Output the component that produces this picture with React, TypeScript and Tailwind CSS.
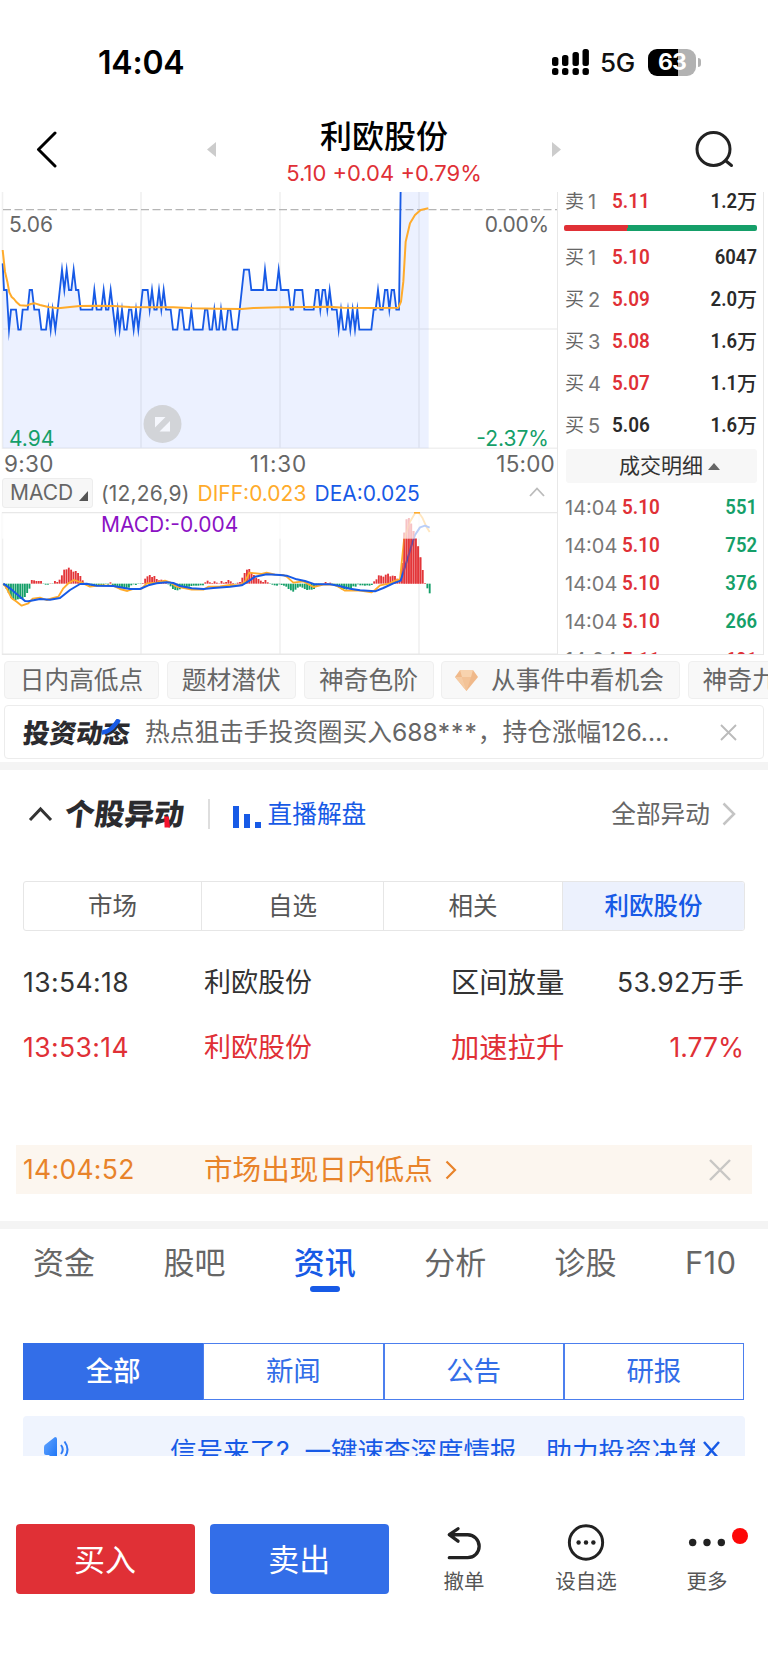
import React from 'react';

const PRICE =
  '8,235 12,315 20,315 27,434 33,374 48,374 55,434 62,434 68,374 83,374 89,315 96,315 103,374 117,374 124,434 138,434 145,374 152,434 158,374 166,434 173,374 186,254 193,315 200,254 207,315 214,315 221,254 228,315 235,315 242,374 277,374 283,315 290,374 304,374 311,315 318,374 325,374 332,315 346,434 353,374 359,434 366,374 373,434 380,434 387,374 394,374 401,434 408,374 415,434 428,315 443,315 449,374 456,315 463,374 470,374 477,315 484,374 491,315 498,374 512,374 519,434 532,434 539,374 546,374 553,434 567,434 574,374 581,434 608,434 615,374 622,374 629,434 636,434 643,374 650,434 657,434 663,374 670,434 677,434 684,374 691,374 698,434 712,434 719,374 732,254 747,254 754,315 789,315 795,254 802,315 829,315 836,254 843,315 865,315 872,374 879,374 885,315 907,315 913,374 941,374 948,315 955,315 961,374 968,315 975,315 982,374 989,315 996,374 1010,374 1016,434 1023,374 1030,434 1037,434 1044,374 1051,434 1058,374 1065,434 1072,374 1078,434 1114,434 1121,374 1127,374 1134,315 1141,374 1148,374 1155,315 1162,315 1168,374 1175,315 1182,315 1189,374 1197,374 1202,10';

const AVERAGE =
  '8,195 15,260 22,290 28,322 35,336 42,342 50,352 60,361 80,362 92,357 105,355 120,360 145,366 175,370 210,366 240,363 290,362 340,363 390,366 450,367 520,367 580,370 650,371 725,372 760,369 840,367 990,365 1030,368 1120,369 1195,368 1203,350 1210,290 1217,170 1230,115 1245,90 1262,75 1285,70';

const DIFF =
  '10,431 20,445 35,475 50,485 65,497 85,490 98,476 120,473 140,480 160,474 175,470 190,445 205,430 222,420 245,428 270,440 300,436 340,437 360,447 382,453 400,447 425,446 440,430 470,428 495,422 510,427 530,440 545,443 575,449 610,449 625,440 660,439 690,435 720,436 735,425 748,398 785,402 800,398 825,404 850,405 860,410 880,428 910,424 940,441 970,434 1000,434 1015,440 1035,452 1080,452 1115,457 1125,450 1140,436 1170,430 1185,422 1200,418 1212,300 1230,245 1245,220 1251,216 1256,217 1268,235 1280,262 1289,276';

const DEA =
  '10,431 30,445 50,462 75,483 85,484 120,477 150,479 180,474 210,450 240,432 260,431 290,437 340,438 390,447 420,447 445,436 470,430 500,427 520,429 540,438 575,445 610,447 640,444 690,440 725,436 745,424 765,410 800,403 840,405 860,407 890,418 915,423 945,433 990,433 1015,437 1050,446 1080,451 1125,454 1150,444 1180,430 1202,422 1220,365 1235,315 1245,285 1260,262 1275,257 1289,263';

const HISTOGRAM = [
  -6, -15, -28, -42, -48, -50, -47, -46, -45, -40, -28, -15, 11, 10, 8, 8, 8, -1, -3, -3, 1, 0, 8, 5, 12, 25, 42, 43, 48, 42,
  36, 38, 32, 23, 10, -2, -5, -9, -10, -9, -5, -7, -7, -5, 0, -3, 4, -4, -7, -10, -12, -13, -14, -13, -12, -5, -2, -4, 0, -1,
  2, 15, 22, 26, 20, 23, 14, 10, 12, 10, 4, -2, -8, -16, -19, -20, -17, -11, -9, -10, -9, -7, -6, -6, -6, -5, -5, 4, 9, 4,
  2, 7, 3, 1, 8, 3, 5, 11, 7, 2, 0, 3, 5, 18, 32, 42, 44, 34, 26, 18, 14, 9, 5, 11, 4, -1, -3, -5, -6, -2,
  -4, -6, -9, -16, -20, -24, -18, -12, -9, -12, -16, -19, -18, -18, -16, -8, -4, -1, 1, 5, 2, 3, -2, -5, -8, -13, -17, -16, -18, -16,
  -14, -8, -9, -2, -5, -5, -6, -5, -6, -4, 7, 13, 25, 24, 21, 27, 30, 22, 24, 23, 15, 10, 62, 153, 193, 197, 180, 158, 137, 112,
  79, 41, 2, -14, -29,
];

function Bars({ from, to, opacity }: { from: number; to: number; opacity: number }) {
  return (
    <g fillOpacity={opacity}>
      {HISTOGRAM.slice(from, to).map((v, i) => (
        <rect
          key={i}
          x={9.3 + (from + i) * 6.94}
          y={v > 0 ? 431 - v : 431}
          width="5.6"
          height={Math.max(Math.abs(v), 1)}
          fill={v > 0 ? '#e33539' : '#159f69'}
        />
      ))}
    </g>
  );
}

function StatusBar() {
  return (
    <div className="flex h-[104px] shrink-0 items-start pl-[98px] pr-[67px] pt-[43px]">
      <span className="text-[32px] font-semibold leading-[40px] tracking-[-0.200px] text-black">14:04</span>
      <div className="ml-auto flex items-center">
        <svg className="-mt-[1px] h-[26px] w-[38px]" viewBox="0 0 38 26">
          <g fill="#000">
            <rect x="0" y="8" width="6.400" height="9" rx="2.500" />
            <rect x="10" y="6" width="6.400" height="11" rx="2.500" />
            <rect x="20.500" y="3" width="6.400" height="14" rx="2.500" />
            <rect x="30.500" y="0" width="6.400" height="17" rx="2.500" />
            <rect x="0" y="19" width="6.400" height="7" rx="2.500" />
            <rect x="10" y="19" width="6.400" height="7" rx="2.500" />
            <rect x="20.500" y="19" width="6.400" height="7" rx="2.500" />
            <rect x="30.500" y="19" width="6.400" height="7" rx="2.500" />
          </g>
        </svg>
        <span className="ml-[10px] mt-[1px] w-[48px] text-[26px] font-medium leading-[38px] tracking-[-0.300px] text-[#111]">5G</span>
        <div className="-mt-[1px] flex h-[27px] w-[48px] items-center justify-center rounded-[9px] bg-[linear-gradient(90deg,#000_63%,#b2b2b2_63%)] text-[23px] font-bold leading-none tracking-[-1px] text-white">
          63
        </div>
        <span className="-mt-[1px] ml-[2px] h-[9px] w-[3px] rounded-r-full bg-[#b2b2b2]" />
      </div>
    </div>
  );
}

function Header() {
  return (
    <div className="flex h-[88px] shrink-0 items-start pl-[34px] pr-[33px]">
      <svg className="mt-[26px] h-[38px] w-[24px]" viewBox="0 0 24 38" fill="none" stroke="#000" strokeWidth="3" strokeLinecap="round" strokeLinejoin="round">
        <path d="M21 3L4.500 19.500 21 36" />
      </svg>
      <svg className="ml-[148px] mt-[37px] h-[17px] w-[11px]" viewBox="0 0 11 17">
        <path d="M10 1v15L1 8.500z" fill="#ccc" />
      </svg>
      <div className="flex w-[334px] flex-col items-center">
        <h1 className="mt-[13px] text-[32px] font-medium leading-[40px] text-black">利欧股份</h1>
        <p className="mt-[3px] whitespace-pre text-[22px] leading-[26px] text-[#e03036]">5.10 +0.04 +0.79%</p>
      </div>
      <svg className="mt-[37px] h-[17px] w-[11px]" viewBox="0 0 11 17">
        <path d="M1 1v15l9-7.500z" fill="#ccc" />
      </svg>
      <svg className="ml-auto mt-[26px] h-[38px] w-[41px]" viewBox="0 0 41 38" fill="none" stroke="#222" strokeWidth="3" strokeLinecap="round">
        <circle cx="19.500" cy="19" r="16.500" />
        <path d="M32 31l5.500 4.500" />
      </svg>
    </div>
  );
}

function PriceChart() {
  return (
    <div className="relative h-[257px] w-[557px]">
      <svg className="block h-[257px] w-[557px]" viewBox="0 192 557 257">
        <g stroke="#f0f0f0" strokeWidth="1.600">
          <path d="M2.500 192V449M141 192V449M280 192V449M419 192V449M2 329H557M2 448.300H557" />
        </g>
        <path d="M3 209.700H557" stroke="#b5b5b5" strokeWidth="1.300" strokeDasharray="8 3.500" />
        <g transform="translate(0 185) scale(0.333333)" fill="none">
          <polygon points={PRICE + ' 1202,0 1286,0 1286,790 8,790'} fill="#2a66ff" fillOpacity="0.09" />
          <polyline points={PRICE} stroke="#175ae6" strokeWidth="5.500" strokeMiterlimit="20" />
          <polyline points={AVERAGE} stroke="#ffab2b" strokeWidth="6" strokeLinejoin="round" />
        </g>
        <circle cx="162.500" cy="424" r="19" fill="#d2d4d8" />
        <path d="M155 417h10.500L155 427.500zM170 431.500h-10.500L170 421z" fill="#f5f7fd" />
      </svg>
      <span className="absolute left-[9px] top-[20px] text-[21px] leading-[26px] text-[#666]">5.06</span>
      <span className="absolute right-[8px] top-[20px] text-[21px] leading-[26px] tracking-[-0.200px] text-[#666]">0.00%</span>
      <span className="absolute left-[9px] top-[234px] text-[21px] leading-[26px] text-[#159f69]">4.94</span>
      <span className="absolute right-[8px] top-[234px] text-[21px] leading-[26px] text-[#159f69]">-2.37%</span>
    </div>
  );
}

function MacdChart() {
  return (
    <div className="relative h-[143px] w-[557px]">
      <svg className="block h-[143px] w-[557px]" viewBox="0 512 557 143">
        <path d="M2.500 512V655M141 512V655M280 512V655M419 512V655" stroke="#f0f0f0" strokeWidth="1.600" />
        <g transform="translate(0 440) scale(0.333333)" fill="none">
          <Bars from={0} to={HISTOGRAM.length} opacity={1} />
          <polyline points={DIFF} stroke="#ffab2b" strokeWidth="5.500" strokeLinejoin="round" />
          <polyline points={DEA} stroke="#175ae6" strokeWidth="6" strokeLinejoin="round" />
          <Bars from={173} to={181} opacity={0.65} />
        </g>
        <rect x="2" y="513" width="554" height="25.700" fill="#fff" fillOpacity="0.700" />
        <path d="M2 512.500H557M2 654.300H557" stroke="#e8e8e8" strokeWidth="1.400" />
        <path d="M414 512.800h6" stroke="#ffab2b" strokeWidth="1.600" />
      </svg>
      <span className="absolute left-[101px] top-[0px] text-[21px] leading-[26px] text-[#8b12c4]">MACD:-0.004</span>
    </div>
  );
}

const BIDS = [
  ['买', '1', '5.10', '6047', ''],
  ['买', '2', '5.09', '2.0', '万'],
  ['买', '3', '5.08', '1.6', '万'],
  ['买', '4', '5.07', '1.1', '万'],
  ['买', '5', '5.06', '1.6', '万'],
];

function QuoteRow({ row, red }: { row: string[]; red: boolean }) {
  return (
    <div className="flex h-[42px] items-center pl-[7px] pr-[6px]">
      <span className="w-[23px] text-[19px] text-[#666]">{row[0]}</span>
      <span className="w-[24px] text-[20px] text-[#777]">{row[1]}</span>
      <span className={'origin-left scale-x-[0.9] font-[Roboto] text-[21px] font-semibold ' + (red ? 'text-[#e03036]' : 'text-[#2a2a2a]')}>{row[2]}</span>
      <span className="ml-auto flex items-center text-[#2a2a2a]">
        <span className="origin-right scale-x-[0.88] font-[Roboto] text-[21px] font-semibold">{row[3]}</span>
        {row[4] && <span className="text-[20px] font-medium">{row[4]}</span>}
      </span>
    </div>
  );
}

const TRADES = [
  ['5.10', '551'],
  ['5.10', '752'],
  ['5.10', '376'],
  ['5.10', '266'],
  ['5.11', '601'],
];

function OrderBook() {
  return (
    <div className="h-[463px] w-[207px] overflow-hidden border-x-[1.500px] border-b-[1.500px] border-[#e8e8e8]">
      <div className="-mt-[11px]">
        <QuoteRow row={['卖', '1', '5.11', '1.2', '万']} red />
      </div>
      <div className="mx-[6px] mt-[2px] h-[6px] rounded-[2px] bg-[linear-gradient(105deg,#e03036_33%,#159f69_33%)]" />
      <div className="mt-[6px]">
        {BIDS.map((r, i) => (
          <QuoteRow key={i} row={r} red={i < 4} />
        ))}
      </div>
      <div className="ml-[8px] mr-[6px] mt-[2px] flex h-[34px] items-center justify-center rounded-[3px] bg-[#f7f7f7] pl-[16px]">
        <span className="text-[21px] text-[#333]">成交明细</span>
        <svg className="ml-[5px] h-[7px] w-[12px]" viewBox="0 0 12 7">
          <path d="M6 0l6 7H0z" fill="#666" />
        </svg>
      </div>
      <div className="mt-[5.500px]">
        {TRADES.map((t, i) => (
          <div key={i} className="flex h-[38.200px] items-center pl-[7px] pr-[6px]">
            <span className="w-[57px] text-[20px] text-[#777]">14:04</span>
            <span className="origin-left scale-x-[0.9] font-[Roboto] text-[21px] font-semibold text-[#e03036]">{t[0]}</span>
            <span className={'ml-auto origin-right scale-x-[0.88] font-[Roboto] text-[21px] font-semibold ' + (i < 4 ? 'text-[#159f69]' : 'text-[#e03036]')}>
              {t[1]}
            </span>
          </div>
        ))}
      </div>
    </div>
  );
}

function MarketPanel() {
  return (
    <div className="flex h-[463px] shrink-0">
      <div className="w-[557px]">
        <PriceChart />
        <div className="flex h-[29px] items-center justify-between pl-[4px] pr-[2px] pt-[1px] text-[22.500px] leading-none text-[#666]">
          <span className="w-[70px] tracking-[0.300px]">9:30</span>
          <span className="-ml-[2px] tracking-[0.900px]">11:30</span>
          <span className="w-[70px] text-right tracking-[0.200px]">15:00</span>
        </div>
        <div className="flex h-[34px] items-start text-[21px] leading-[30px]">
          <div className="ml-[2px] flex h-[30px] w-[91px] items-center rounded-[3px] border border-[#ededed] bg-[#f7f7f7] pl-[7px] text-[#666]">
            <span>MACD</span>
            <svg className="ml-[6px] mt-[6px] h-[10px] w-[9px]" viewBox="0 0 9 10">
              <path d="M9 0v10H0z" fill="#555" />
            </svg>
          </div>
          <span className="ml-[8px] mt-[1px] w-[96.500px] tracking-[0.200px] text-[#666]">(12,26,9)</span>
          <span className="mt-[1px] w-[117px] text-[#ffab2b]">DIFF:0.023</span>
          <span className="mt-[1px] text-[#175ae6]">DEA:0.025</span>
          <svg className="ml-auto mr-[12px] mt-[9px] h-[10px] w-[16px]" viewBox="0 0 16 10" fill="none" stroke="#bbb" strokeWidth="1.800">
            <path d="M1 9l7-7.500L15 9" />
          </svg>
        </div>
        <MacdChart />
      </div>
      <OrderBook />
    </div>
  );
}

function Chips() {
  const chip = 'flex h-[38px] shrink-0 items-center rounded-[4px] border border-[#efefef] bg-[#f8f8f8] pt-[2px]';
  return (
    <div className="mt-[6px] flex h-[38px] shrink-0 gap-[7.500px] overflow-hidden pl-[4px] text-[24.700px] text-[#666]">
      <span className={chip + ' w-[155px] justify-center'}>日内高低点</span>
      <span className={chip + ' w-[129.500px] justify-center'}>题材潜伏</span>
      <span className={chip + ' w-[130px] justify-center'}>神奇色阶</span>
      <span className={chip + ' w-[239px] pl-[13px]'}>
        <svg className="-mt-[3px] mr-[13px] h-[22px] w-[23px]" viewBox="0 0 23 22">
          <path d="M5 1h13l5 7-11.500 14L0 8z" fill="#f0b98a" />
          <path d="M5 1h13l-2 7H7z" fill="#f8d3ae" />
          <path d="M7 8h9l-4.500 14z" fill="#f3c397" />
          <path d="M0 8h7l4.500 14z" fill="#f5cba3" />
        </svg>
        从事件中看机会
      </span>
      <span className={chip + ' w-[155px] pl-[14px]'}>神奇九转</span>
    </div>
  );
}

function Ticker() {
  return (
    <div className="ml-[4px] mt-[6px] flex h-[54px] w-[760px] shrink-0 items-center rounded-[4px] border-[1.500px] border-[#ececec] pl-[18px] pr-[26px]">
      <span className="relative mr-[14px] mt-[1px] inline-block w-[108px] -skew-x-[6deg] text-[26.700px] font-black leading-[30px] text-[#2b2b2f]">
        投资动态
        <svg className="absolute left-[78px] top-[1px] h-[17px] w-[20px]" viewBox="0 0 20 17" fill="none" stroke="#175ae6" strokeWidth="4.600">
          <path d="M16.500 0.500C12 8 8 13 1 13.500" />
        </svg>
      </span>
      <span className="mt-[2px] whitespace-nowrap text-[24.700px] text-[#666]">
        热点狙击手投资圈买入688<span className="tracking-[1px]">***</span>，持仓涨幅126.…
      </span>
      <svg className="ml-auto h-[17px] w-[17px]" viewBox="0 0 17 17" stroke="#bbb" strokeWidth="1.900">
        <path d="M1 1l15 15M16 1L1 16" />
      </svg>
    </div>
  );
}

function MovementSection() {
  const cell = 'flex items-center justify-center border-r-[1.500px] border-[#e6e6e6]';
  return (
    <section className="flex h-[451px] shrink-0 flex-col">
      <div className="mt-[26px] flex h-[36px] items-center pl-[28px] pr-[32px]">
        <svg className="h-[16px] w-[25px]" viewBox="0 0 25 16" fill="none" stroke="#333" strokeWidth="3">
          <path d="M2 14L12.500 3 23 14" />
        </svg>
        <span className="relative ml-[12px] inline-block w-[121px] -skew-x-[6deg] text-[29.800px] font-black leading-[36px] text-[#2b2b2f]">
          个股异动
          <svg className="absolute left-[99px] top-[20px] h-[12px] w-[8px]" viewBox="0 0 8 12">
            <path d="M0.500 0.500h4.500L7.500 11.500H2z" fill="#f5132d" />
          </svg>
        </span>
        <span className="ml-[22px] h-[30px] w-[1.500px] bg-[#dedede]" />
        <svg className="ml-[23px] mt-[5px] h-[22px] w-[28px]" viewBox="0 0 28 22" fill="#175ae6">
          <rect x="0" y="0" width="6" height="22" />
          <rect x="11" y="8" width="6" height="14" />
          <rect x="22" y="16" width="6" height="6" />
        </svg>
        <span className="ml-[7px] mt-[2px] text-[24.700px] text-[#175ae6]">直播解盘</span>
        <span className="ml-auto mt-[2px] text-[24.700px] text-[#666]">全部异动</span>
        <svg className="ml-[12px] h-[24px] w-[14px]" viewBox="0 0 14 24" fill="none" stroke="#c4c4c4" strokeWidth="2.500">
          <path d="M1.500 1.500L12 12 1.500 22.500" />
        </svg>
      </div>
      <div className="ml-[23px] mt-[49px] grid h-[50px] w-[722px] shrink-0 grid-cols-[178px_182px_179px_1fr] overflow-hidden rounded-[3px] border-[1.500px] border-[#e6e6e6] text-[24.500px] text-[#555]">
        <span className={cell}>市场</span>
        <span className={cell}>自选</span>
        <span className={cell}>相关</span>
        <span className="flex items-center justify-center bg-[#ecf1fd] font-medium text-[#175ae6]">利欧股份</span>
      </div>
      <div className="ml-[23px] mt-[19px] w-[721px] text-[26.500px] text-[#333]">
        <div className="grid h-[65px] grid-cols-[181px_247px_1fr_auto] items-center">
          <span className="tracking-[0.400px]">13:54:18</span>
          <span className="mt-[2px] text-[27px]">利欧股份</span>
          <span className="mt-[1px] text-[28.300px]">区间放量</span>
          <span className="mt-[1px] tracking-[0.300px]">53.92万手</span>
        </div>
        <div className="grid h-[65px] grid-cols-[181px_247px_1fr_auto] items-center text-[#e03036]">
          <span className="tracking-[0.400px]">13:53:14</span>
          <span className="mt-[2px] text-[27px]">利欧股份</span>
          <span className="mt-[1px] text-[28.300px]">加速拉升</span>
          <span>1.77%</span>
        </div>
      </div>
      <div className="ml-[16px] mt-[65px] flex h-[49px] w-[736px] shrink-0 items-center bg-[#fcf6ef] pl-[7px] pr-[21px] text-[26.500px] text-[#e8832a]">
        <span className="mt-[1px] w-[181px] tracking-[0.300px]">14:04:52</span>
        <span className="mt-[1px] text-[28.600px]">市场出现日内低点</span>
        <svg className="ml-[12px] h-[20px] w-[12px]" viewBox="0 0 12 20" fill="none" stroke="#e8832a" strokeWidth="2.200">
          <path d="M1.500 1.500L10 10l-8.500 8.500" />
        </svg>
        <svg className="ml-auto h-[22px] w-[22px]" viewBox="0 0 22 22" stroke="#c8c6c4" strokeWidth="2.400">
          <path d="M1 1l20 20M21 1L1 21" />
        </svg>
      </div>
    </section>
  );
}

function NewsSection() {
  const tab = 'w-[62px] text-center';
  const cell = 'flex items-center justify-center border-[1.500px] border-[#4c7fee] text-[#336ee8]';
  return (
    <section className="flex h-[227px] shrink-0 flex-col overflow-hidden">
      <div className="flex h-[68px] shrink-0 items-center justify-between pl-[33px] pr-[33px] text-[31px] text-[#666]">
        <span className={tab}>资金</span>
        <span className={tab}>股吧</span>
        <span className="relative w-[62px] text-center font-medium text-[#175ae6]">
          资讯
          <i className="absolute bottom-[-6px] left-[16px] h-[6px] w-[30px] rounded-full bg-[#175ae6]" />
        </span>
        <span className={tab}>分析</span>
        <span className={tab}>诊股</span>
        <span className="w-[50px] whitespace-nowrap text-center tracking-[0.300px]">F10</span>
      </div>
      <div className="ml-[23px] mt-[46px] grid h-[57px] w-[722px] shrink-0 grid-cols-4 pr-[1px] text-[27.500px]">
        <span className="flex items-center justify-center bg-[#336ee8] pt-[1px] font-medium text-white">全部</span>
        <span className={cell}>新闻</span>
        <span className={cell}>公告</span>
        <span className={cell}>研报</span>
      </div>
      <div className="ml-[23px] mt-[16px] flex h-[69px] w-[722px] shrink-0 items-center rounded-t-[4px] bg-[#eff4fe] pl-[20px] pr-[25px] text-[#175ae6]">
        <svg className="-mt-[2px] h-[25px] w-[27px]" viewBox="0 0 27 25">
          <defs>
            <linearGradient id="speaker" x1="0" y1="0" x2="1" y2="1">
              <stop offset="0" stopColor="#63a5ff" />
              <stop offset="1" stopColor="#1670f5" />
            </linearGradient>
          </defs>
          <path d="M1 10q0-2 2-3L12 0q2 0 2 2v21q0 2-2 2L6 18H3q-2 0-2-2z" fill="url(#speaker)" />
          <path d="M18 8q3.500 4.500 0 9M21.500 4.500q6 8 0 16" fill="none" stroke="#2f7cf6" strokeWidth="2" />
        </svg>
        <div className="ml-[100px] w-[525px] overflow-hidden whitespace-pre text-[26.500px] leading-[40px]">
          <span>信号来了?</span>
          <span className="ml-[15px]">一键速查深度情报</span>
          <span className="ml-[29px]">助力投资决策</span>
        </div>
        <svg className="ml-auto h-[19px] w-[17px]" viewBox="0 0 17 19" stroke="#175ae6" strokeWidth="2.500">
          <path d="M1 1l15 17M16 1L1 18" />
        </svg>
      </div>
    </section>
  );
}

function ActionBar() {
  const label = 'text-[20.500px] leading-[24px] text-[#555]';
  return (
    <div className="mt-[68px] flex h-[70px] shrink-0 text-white">
      <button className="ml-[15.500px] h-[70px] w-[179px] rounded-[4px] bg-[#e03036] pt-[2px] text-[31px]">买入</button>
      <button className="ml-[15px] h-[70px] w-[179.500px] rounded-[4px] bg-[#336ee8] pt-[2px] text-[31px]">卖出</button>
      <div className="ml-[34px] flex w-[82px] flex-col items-center">
        <svg className="mt-[2px] h-[37px] w-[40px]" viewBox="0 0 40 37" fill="none" stroke="#222" strokeWidth="3.600" strokeLinecap="round" strokeLinejoin="round">
          <path d="M13.500 3L4 9.500l9.500 7M5 9.500h19a12.500 12.500 0 0 1 0 25H4" />
        </svg>
        <span className={label + ' mt-[10px]'}>撤单</span>
      </div>
      <div className="ml-[40px] flex w-[82px] flex-col items-center">
        <svg className="h-[40px] w-[40px]" viewBox="0 0 40 40">
          <circle cx="20" cy="20" r="18" fill="none" stroke="#222" strokeWidth="3.200" />
          <g fill="#222">
            <circle cx="12" cy="20" r="2.400" />
            <circle cx="20" cy="20" r="2.400" />
            <circle cx="28" cy="20" r="2.400" />
          </g>
        </svg>
        <span className={label + ' mt-[9px]'}>设自选</span>
      </div>
      <div className="relative ml-[39px] flex w-[82px] flex-col items-center">
        <svg className="h-[40px] w-[40px]" viewBox="0 0 40 40" fill="#222">
          <circle cx="4.500" cy="20" r="4" />
          <circle cx="20" cy="20" r="4" />
          <circle cx="35.500" cy="20" r="4" />
        </svg>
        <span className={label + ' mt-[9px]'}>更多</span>
        <i className="absolute left-[66px] top-[4px] h-[16px] w-[16px] rounded-full bg-[#fd0707]" />
      </div>
    </div>
  );
}

export default function App() {
  return (
    <div className="flex h-[1670px] w-[768px] flex-col overflow-hidden bg-white font-['Inter','Noto_Sans_CJK_SC',sans-serif]">
      <StatusBar />
      <Header />
      <MarketPanel />
      <Chips />
      <Ticker />
      <div className="mt-[3px] h-[8px] shrink-0 bg-[#f4f4f4]" />
      <MovementSection />
      <div className="h-[8px] shrink-0 bg-[#f4f4f4]" />
      <NewsSection />
      <ActionBar />
    </div>
  );
}
